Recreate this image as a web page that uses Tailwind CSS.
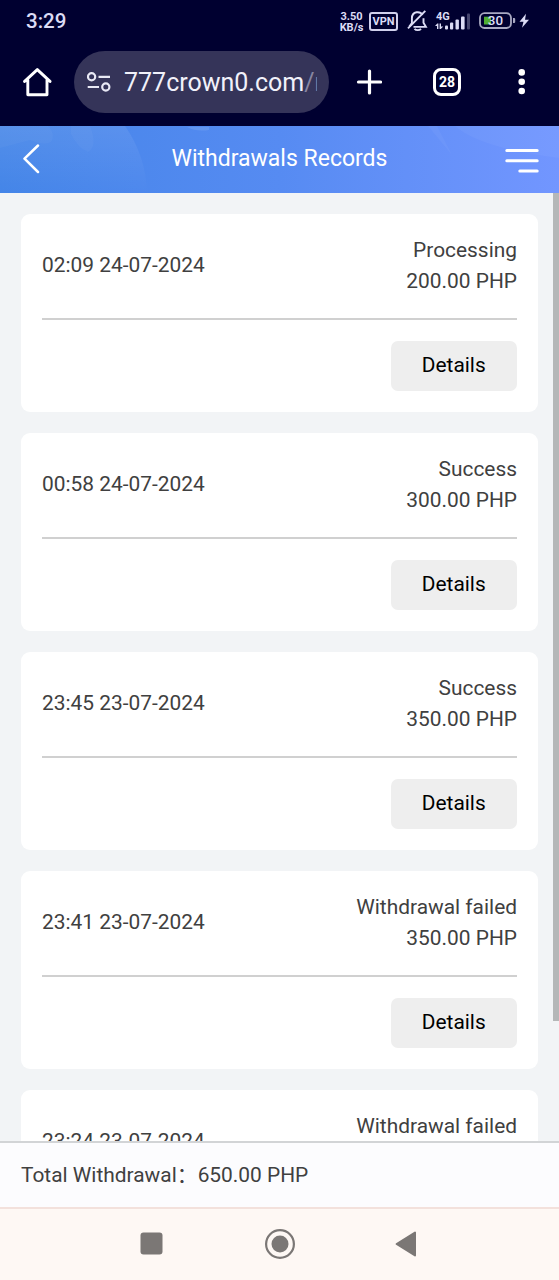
<!DOCTYPE html>
<html lang="en">
<head>
    <meta charset="UTF-8">
    <meta name="viewport" content="width=device-width, initial-scale=1.0">
    <title>Withdrawals Records</title>
    <script src="https://cdn.jsdelivr.net/npm/@tailwindcss/browser@4"></script>
</head>
<body class="h-[1280px] w-[559px] overflow-hidden flex flex-col bg-[#f2f4f6] text-[#404040] font-['Roboto','Noto_Sans_CJK_SC',sans-serif]">
    <!-- Status bar + browser toolbar -->
    <header class="h-[126px] shrink-0 bg-[#000030] text-white">
        <div class="h-[42px] flex items-center justify-between pl-[26px] pr-[29px]">
            <span class="pt-[1px] text-[20.5px] font-medium leading-none text-[#dcdcf5]">3:29</span>
            <div class="flex items-center text-[#dcdcf5]">
                <div class="w-[25px] mr-[5px] -ml-[1px] pt-[1px] text-center text-[11px] leading-[11px] font-bold whitespace-nowrap">3.50<br>KB/s</div>
                <div class="w-[29px] h-[19px] mr-[9px] border-2 border-[#d0d0ec] rounded-[3px] flex items-center justify-center text-[11px] font-bold leading-none">VPN</div>
                <svg class="w-[22px] h-[24px] mr-[6px]" viewBox="0 0 22 24" fill="none" stroke="currentColor" stroke-width="1.9">
                    <path d="M15.5 5.9C14.3 3.9 12 2.9 9.6 3.3C6.6 3.9 4.9 6.4 4.9 9.3V14L2.3 17.5"/>
                    <path d="M16.5 9.2V13.7L18.9 17.9H6.5"/>
                    <path d="M1 19.3L18.3 1.9"/>
                    <path d="M7.5 19.9C9 21.5 12.5 21.5 14 19.9"/>
                </svg>
                <svg class="w-[36px] h-[20px] mr-[8px]" viewBox="0 0 36 20" fill="currentColor">
                    <text x="1" y="8.6" font-size="11" font-weight="700" font-family="Roboto, sans-serif">4G</text>
                    <path d="M0 15L2.3 12.4H3.4V18H2V15zM4.6 18V12.4H6V15.4H8.3L5.8 18z"/>
                    <rect x="10" y="14.4" width="3" height="4" rx="1"/>
                    <rect x="15" y="11.4" width="3.2" height="7" rx="1"/>
                    <rect x="20.5" y="8.4" width="3.4" height="10" rx="1"/>
                    <rect x="26" y="5.4" width="3.6" height="13" rx="1"/>
                    <rect x="32" y="2.4" width="3" height="16" rx="1" fill="#45456e"/>
                </svg>
                <svg class="w-[51px] h-[18px]" viewBox="0 0 51 18" fill="currentColor">
                    <rect x="1" y="1.2" width="31" height="14.8" rx="4.5" fill="none" stroke="#a9a9c2" stroke-width="1.8"/>
                    <path d="M5 4.7H12V12.5H5z" fill="#4fae32"/>
                    <path d="M34 6h1.2a1 1 0 0 1 1 1v3a1 1 0 0 1-1 1H34z" fill="#a9a9c2"/>
                    <text x="8.8" y="13.4" font-size="13.4" font-weight="500" font-family="Roboto, sans-serif">30</text>
                    <path d="M47 1.8L40.5 9.8H44.5L43 15.8L50 7.8H46z"/>
                </svg>
            </div>
        </div>
        <div class="h-[79px] flex items-center">
            <svg class="w-[30px] h-[30px] ml-[22px]" viewBox="0 0 30 30" fill="none" stroke="currentColor" stroke-width="2.9" stroke-linejoin="round" stroke-linecap="round">
                <path d="M2.6 14.4L15.3 2.6L28 14.4M5.8 13V27.8H25V13"/>
            </svg>
            <div class="ml-[22px] w-[255px] h-[62px] rounded-full bg-[#353459] flex items-center overflow-hidden">
                <svg class="w-[24px] h-[20px] ml-[13px] shrink-0" viewBox="0 0 24 20" fill="none" stroke="#e8e8f4" stroke-width="2.2">
                    <circle cx="4.6" cy="4.8" r="3.6"/>
                    <path d="M11.5 4.8H23M.7 15H12"/>
                    <circle cx="18.8" cy="15" r="3.6"/>
                </svg>
                <span class="ml-[13px] mt-[3px] w-[193px] text-[25px] text-[#f1f1fa] whitespace-nowrap overflow-hidden">777crown0.com<span class="text-[#8886a2]">/m</span></span>
            </div>
            <svg class="w-[26px] h-[26px] ml-[27px]" viewBox="0 0 26 26" fill="none" stroke="currentColor" stroke-width="3.2" stroke-linecap="round">
                <path d="M13.5 2V24M2.5 13H24.5"/>
            </svg>
            <div class="ml-[51px] w-[28px] h-[28px] border-3 border-white rounded-[8px] flex items-center justify-center text-[14px] font-bold leading-none">28</div>
            <svg class="w-[8px] h-[26px] ml-[57px]" viewBox="0 0 8 26" fill="currentColor">
                <circle cx="3.7" cy="3.4" r="3.3"/>
                <circle cx="3.7" cy="12.7" r="3.3"/>
                <circle cx="3.7" cy="22" r="3.3"/>
            </svg>
        </div>
    </header>

    <!-- Page title -->
    <div class="relative h-[67px] shrink-0 overflow-hidden bg-linear-to-r from-[#4485e8] via-[#568bf2] to-[#7296ff] text-white">
        <svg class="absolute inset-0 w-full h-full" viewBox="0 0 559 67" preserveAspectRatio="none">
            <defs>
                <linearGradient id="glow" x1="0" y1="0" x2="0" y2="1">
                    <stop offset="0" stop-color="#fff" stop-opacity=".08"/>
                    <stop offset="1" stop-color="#fff" stop-opacity="0"/>
                </linearGradient>
            </defs>
            <path d="M0 0H125Q146 30 147 67H0z" fill="url(#glow)"/>
            <path d="M0 0H48Q56 8 51 16Q44 20 30 14L0 22zM71 0H90Q98 20 88 26Q78 22 71 8z" fill="#fff" fill-opacity=".03"/>
            <path d="M187 1H209V4Q196 6 187 1z" fill="#fff" fill-opacity=".1"/>
            <path d="M428 0L452 29L437 0zM455 0Q480 22 559 32V0z" fill="#fff" fill-opacity=".04"/>
        </svg>
        <div class="relative h-full flex items-center justify-between pl-[22px] pr-[20px]">
            <svg class="w-[36px] h-[30px] -mt-[2px]" viewBox="0 0 36 30" fill="none" stroke="currentColor" stroke-width="2.5" stroke-linecap="round" stroke-linejoin="round">
                <path d="M16 1.5L2.5 14.7L16 28"/>
            </svg>
            <h1 class="-mt-[2px] -ml-[4px] text-[23px] leading-none">Withdrawals Records</h1>
            <svg class="w-[34px] h-[26px] mt-[2px]" viewBox="0 0 34 26" fill="none" stroke="currentColor" stroke-width="3" stroke-linecap="round">
                <path d="M1.8 2.6H32.2M1.8 12.7H32.2M14.8 22.9H32.2"/>
            </svg>
        </div>
    </div>

    <!-- Records -->
    <main class="relative h-[948px] shrink-0 overflow-hidden pt-[20.5px] px-[21px]">
        <div id="records" class="flex flex-col gap-[21px]"></div>
        <div class="absolute right-0 top-0 w-[6px] h-[828px] bg-[#b5b7b8]"></div>
    </main>

    <footer class="h-[66px] shrink-0 border-t-2 border-[#d2d4d6] bg-[#fcfcfe] px-[21px] pt-[2px] flex items-center text-[20.9px]">
        <span class="whitespace-pre">Total Withdrawal：650.00 PHP</span>
    </footer>

    <!-- System navigation -->
    <nav class="h-[73px] shrink-0 border-t-2 border-[#f3e1dc] bg-[#fef8f4] text-[#7b7775] flex items-center pl-[140px] pb-[2px]">
        <svg class="w-[23px] h-[23px]" viewBox="0 0 23 23" fill="currentColor">
            <rect x=".5" y=".5" width="22" height="22" rx="3"/>
        </svg>
        <svg class="w-[32px] h-[32px] ml-[100.5px]" viewBox="0 0 32 32">
            <circle cx="16" cy="16" r="13.9" fill="none" stroke="currentColor" stroke-width="2.2"/>
            <circle cx="16" cy="16" r="8.5" fill="currentColor"/>
        </svg>
        <svg class="w-[22px] h-[26px] ml-[98.5px]" viewBox="0 0 22 26" fill="currentColor" stroke="currentColor" stroke-width="2" stroke-linejoin="round">
            <path d="M21 1.6V24.4L2.6 13z"/>
        </svg>
    </nav>

    <script>
        const records = [
            { time: '02:09 24-07-2024', status: 'Processing', amount: '200.00 PHP' },
            { time: '00:58 24-07-2024', status: 'Success', amount: '300.00 PHP' },
            { time: '23:45 23-07-2024', status: 'Success', amount: '350.00 PHP' },
            { time: '23:41 23-07-2024', status: 'Withdrawal failed', amount: '350.00 PHP' },
            { time: '23:24 23-07-2024', status: 'Withdrawal failed', amount: '350.00 PHP' }
        ];

        document.getElementById('records').innerHTML = records.map(r => `
            <div class="h-[198.1px] shrink-0 bg-white rounded-[9px] px-[21px] pt-[22px]">
                <div class="flex items-center justify-between h-[84px] pb-[22px] border-b-2 border-[#d0d0d0] text-[20.9px] leading-[31px]">
                    <span>${r.time}</span>
                    <div class="text-right">
                        <p>${r.status}</p>
                        <p>${r.amount}</p>
                    </div>
                </div>
                <div class="flex justify-end pt-[21px]">
                    <button class="w-[126.5px] h-[50px] rounded-[7px] bg-[#eeeeee] text-black text-[20.9px]">Details</button>
                </div>
            </div>`).join('');
    </script>
</body>
</html>
